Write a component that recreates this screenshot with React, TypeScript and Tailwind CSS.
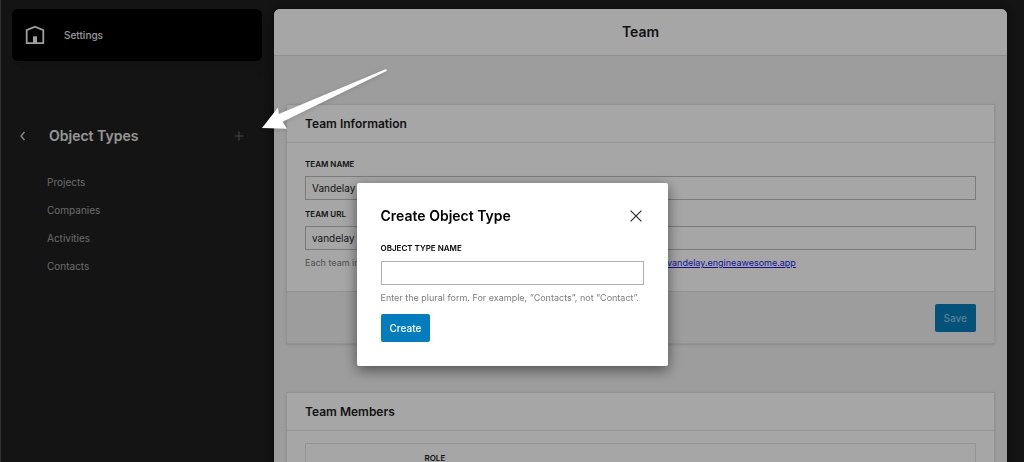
import { useState } from 'react'

const OBJECT_TYPES = ['Projects', 'Companies', 'Activities', 'Contacts']

function Sidebar({ onAdd }: { onAdd: () => void }) {
  return (
    <aside className="w-[274px] shrink-0 border-l border-[#4a4a4a] pl-[11px] pr-3 pt-[9px]">
      <a
        href="#settings"
        className="flex h-13 items-center rounded-md bg-black pl-[13px] text-[10px] font-medium text-[#e6e6e6] shadow-lg"
      >
        <svg className="h-5 w-5" viewBox="0 0 20 20" fill="none" stroke="#f5f5f5" strokeWidth="1.8">
          <path d="M1.7 18.2V5.2L10 1.7l8.3 3.5v13z" />
          <path d="M8 18.3v-7h4v7z" fill="#f5f5f5" stroke="none" />
        </svg>
        <span className="ml-[19px]">Settings</span>
      </a>

      <div className="mt-[65px] flex h-5 items-center pl-[7px] pr-[18px]">
        <button type="button" aria-label="Back" className="text-[#d8d8d8]">
          <svg className="h-[10px] w-2" viewBox="0 0 8 10" fill="none" stroke="currentColor" strokeWidth="1.3">
            <path d="M5.5 1 2 5l3.5 4" />
          </svg>
        </button>
        <h2 className="ml-[22px] text-sm font-semibold text-[#e6e6e6]">Object Types</h2>
        <button type="button" aria-label="Add object type" onClick={onAdd} className="ml-auto text-[#6c6c6c]">
          <svg className="h-[10px] w-[10px]" viewBox="0 0 10 10" fill="none" stroke="currentColor">
            <path d="M5 .5v9M.5 5h9" />
          </svg>
        </button>
      </div>

      <ul className="mt-7 pl-[35px]">
        {OBJECT_TYPES.map((name) => (
          <li key={name} className="mb-3 h-4">
            <a href={`#${name.toLowerCase()}`} className="block text-[10px] leading-4 text-[#a5a5a5]">
              {name}
            </a>
          </li>
        ))}
      </ul>
    </aside>
  )
}

function TeamInformation() {
  return (
    <section className="border border-[#e0e0e0] bg-white shadow">
      <h2 className="border-b border-[#e4e4e4] px-[18px] pt-[10px] pb-[9px] text-xs leading-[18px] font-semibold">
        Team Information
      </h2>
      <div className="px-[18px] pt-[14px] pb-5">
        <label htmlFor="team-name" className="block text-[8px] leading-[14px] font-semibold">
          TEAM NAME
        </label>
        <input
          id="team-name"
          defaultValue="Vandelay"
          className="mt-[5px] block h-6 w-full border border-[#bdbdbd] px-[6px] text-[10px]"
        />
        <label htmlFor="team-url" className="mt-[7px] block text-[8px] leading-[14px] font-semibold">
          TEAM URL
        </label>
        <input
          id="team-url"
          defaultValue="vandelay"
          className="mt-[5px] block h-6 w-full border border-[#bdbdbd] px-[6px] text-[10px]"
        />
        <div className="mt-[5px] flex text-[9px] leading-4 text-[#7c7c7c]">
          <p className="w-[362px]">Each team in</p>
          <a href="#team-url" className="text-[#1a1aee] underline">
            vandelay.engineawesome.app
          </a>
        </div>
      </div>
      <div className="flex justify-end border-t border-[#e0e0e0] bg-[#f1f1f1] px-[18px] pt-3 pb-[11px]">
        <button type="button" className="h-7 rounded-xs bg-[#077dbc] px-[9px] text-[10px] font-medium text-[#8fc4e2]">
          Save
        </button>
      </div>
    </section>
  )
}

function TeamMembers() {
  return (
    <section className="mt-12 border border-[#e0e0e0] bg-white shadow">
      <h2 className="border-b border-[#e4e4e4] px-[18px] pt-[10px] pb-[9px] text-xs leading-[18px] font-semibold">
        Team Members
      </h2>
      <div className="px-[18px] py-3">
        <table className="w-full border border-[#e4e4e4] text-left">
          <thead>
            <tr>
              <td className="w-[111px]" />
              <th className="px-2 pt-2 pb-2 text-[8px] leading-[12px] font-semibold">ROLE</th>
            </tr>
          </thead>
        </table>
      </div>
    </section>
  )
}

function CreateObjectType({ onClose }: { onClose: () => void }) {
  return (
    <div className="fixed inset-0 flex items-start justify-center bg-black/35 pt-[183px]">
      <form
        role="dialog"
        aria-labelledby="dialog-title"
        onSubmit={(e) => e.preventDefault()}
        className="w-[311px] rounded-xs bg-white p-6 text-black shadow-[0_4px_14px_rgba(0,0,0,0.5)]"
      >
        <div className="flex items-center justify-between">
          <h2 id="dialog-title" className="text-sm leading-[18px] font-semibold">
            Create Object Type
          </h2>
          <button type="button" aria-label="Close" onClick={onClose} className="mr-[2px]">
            <svg className="h-3 w-3" viewBox="0 0 12 12" fill="none" stroke="#222" strokeWidth="1.1">
              <path d="m.6.6 10.8 10.8M11.4.6.6 11.4" />
            </svg>
          </button>
        </div>
        <label htmlFor="type-name" className="mt-4 block text-[8px] leading-[14px] font-semibold">
          OBJECT TYPE NAME
        </label>
        <input id="type-name" className="mt-[6px] block h-6 w-full border border-[#b0b0b0] px-[6px] text-[10px]" />
        <p className="mt-[5px] text-[9px] leading-4 whitespace-nowrap text-[#7c7c7c]">
          Enter the plural form. For example, “Contacts”, not “Contact”.
        </p>
        <button type="submit" className="mt-2 block h-7 rounded-xs bg-[#057dbc] px-[9px] text-[10px] font-medium text-white">
          Create
        </button>
      </form>
    </div>
  )
}

export default function App() {
  const [open, setOpen] = useState(true)

  return (
    <div className="relative flex h-screen overflow-hidden bg-[#202020] font-['Inter',sans-serif] text-[#1c1c1c]">
      <Sidebar onAdd={() => setOpen(true)} />
      <div className="min-w-0 flex-1 pt-[9px] pr-[17px]">
        <main className="min-h-full rounded-t-md bg-[#f1f1f1] shadow-[0_0_14px_rgba(0,0,0,0.6)]">
          <h1 className="rounded-t-md border-b border-[#dedede] bg-white text-center text-sm leading-[46px] font-semibold">
            Team
          </h1>
          <div className="px-3 pt-12">
            <TeamInformation />
            <TeamMembers />
          </div>
        </main>
      </div>
      {open && <CreateObjectType onClose={() => setOpen(false)} />}
      {/* pointer to the add button */}
      <svg
        className="pointer-events-none absolute top-[66px] left-[260px] h-[66px] w-[130px] drop-shadow-sm"
        viewBox="260 66 130 66"
        fill="#fff"
      >
        <path d="M262 128 278 107.5 278.8 114 385.5 69.2Q387.5 69.5 386.5 71L282.6 121.8 287 128.8Z" />
      </svg>
    </div>
  )
}
